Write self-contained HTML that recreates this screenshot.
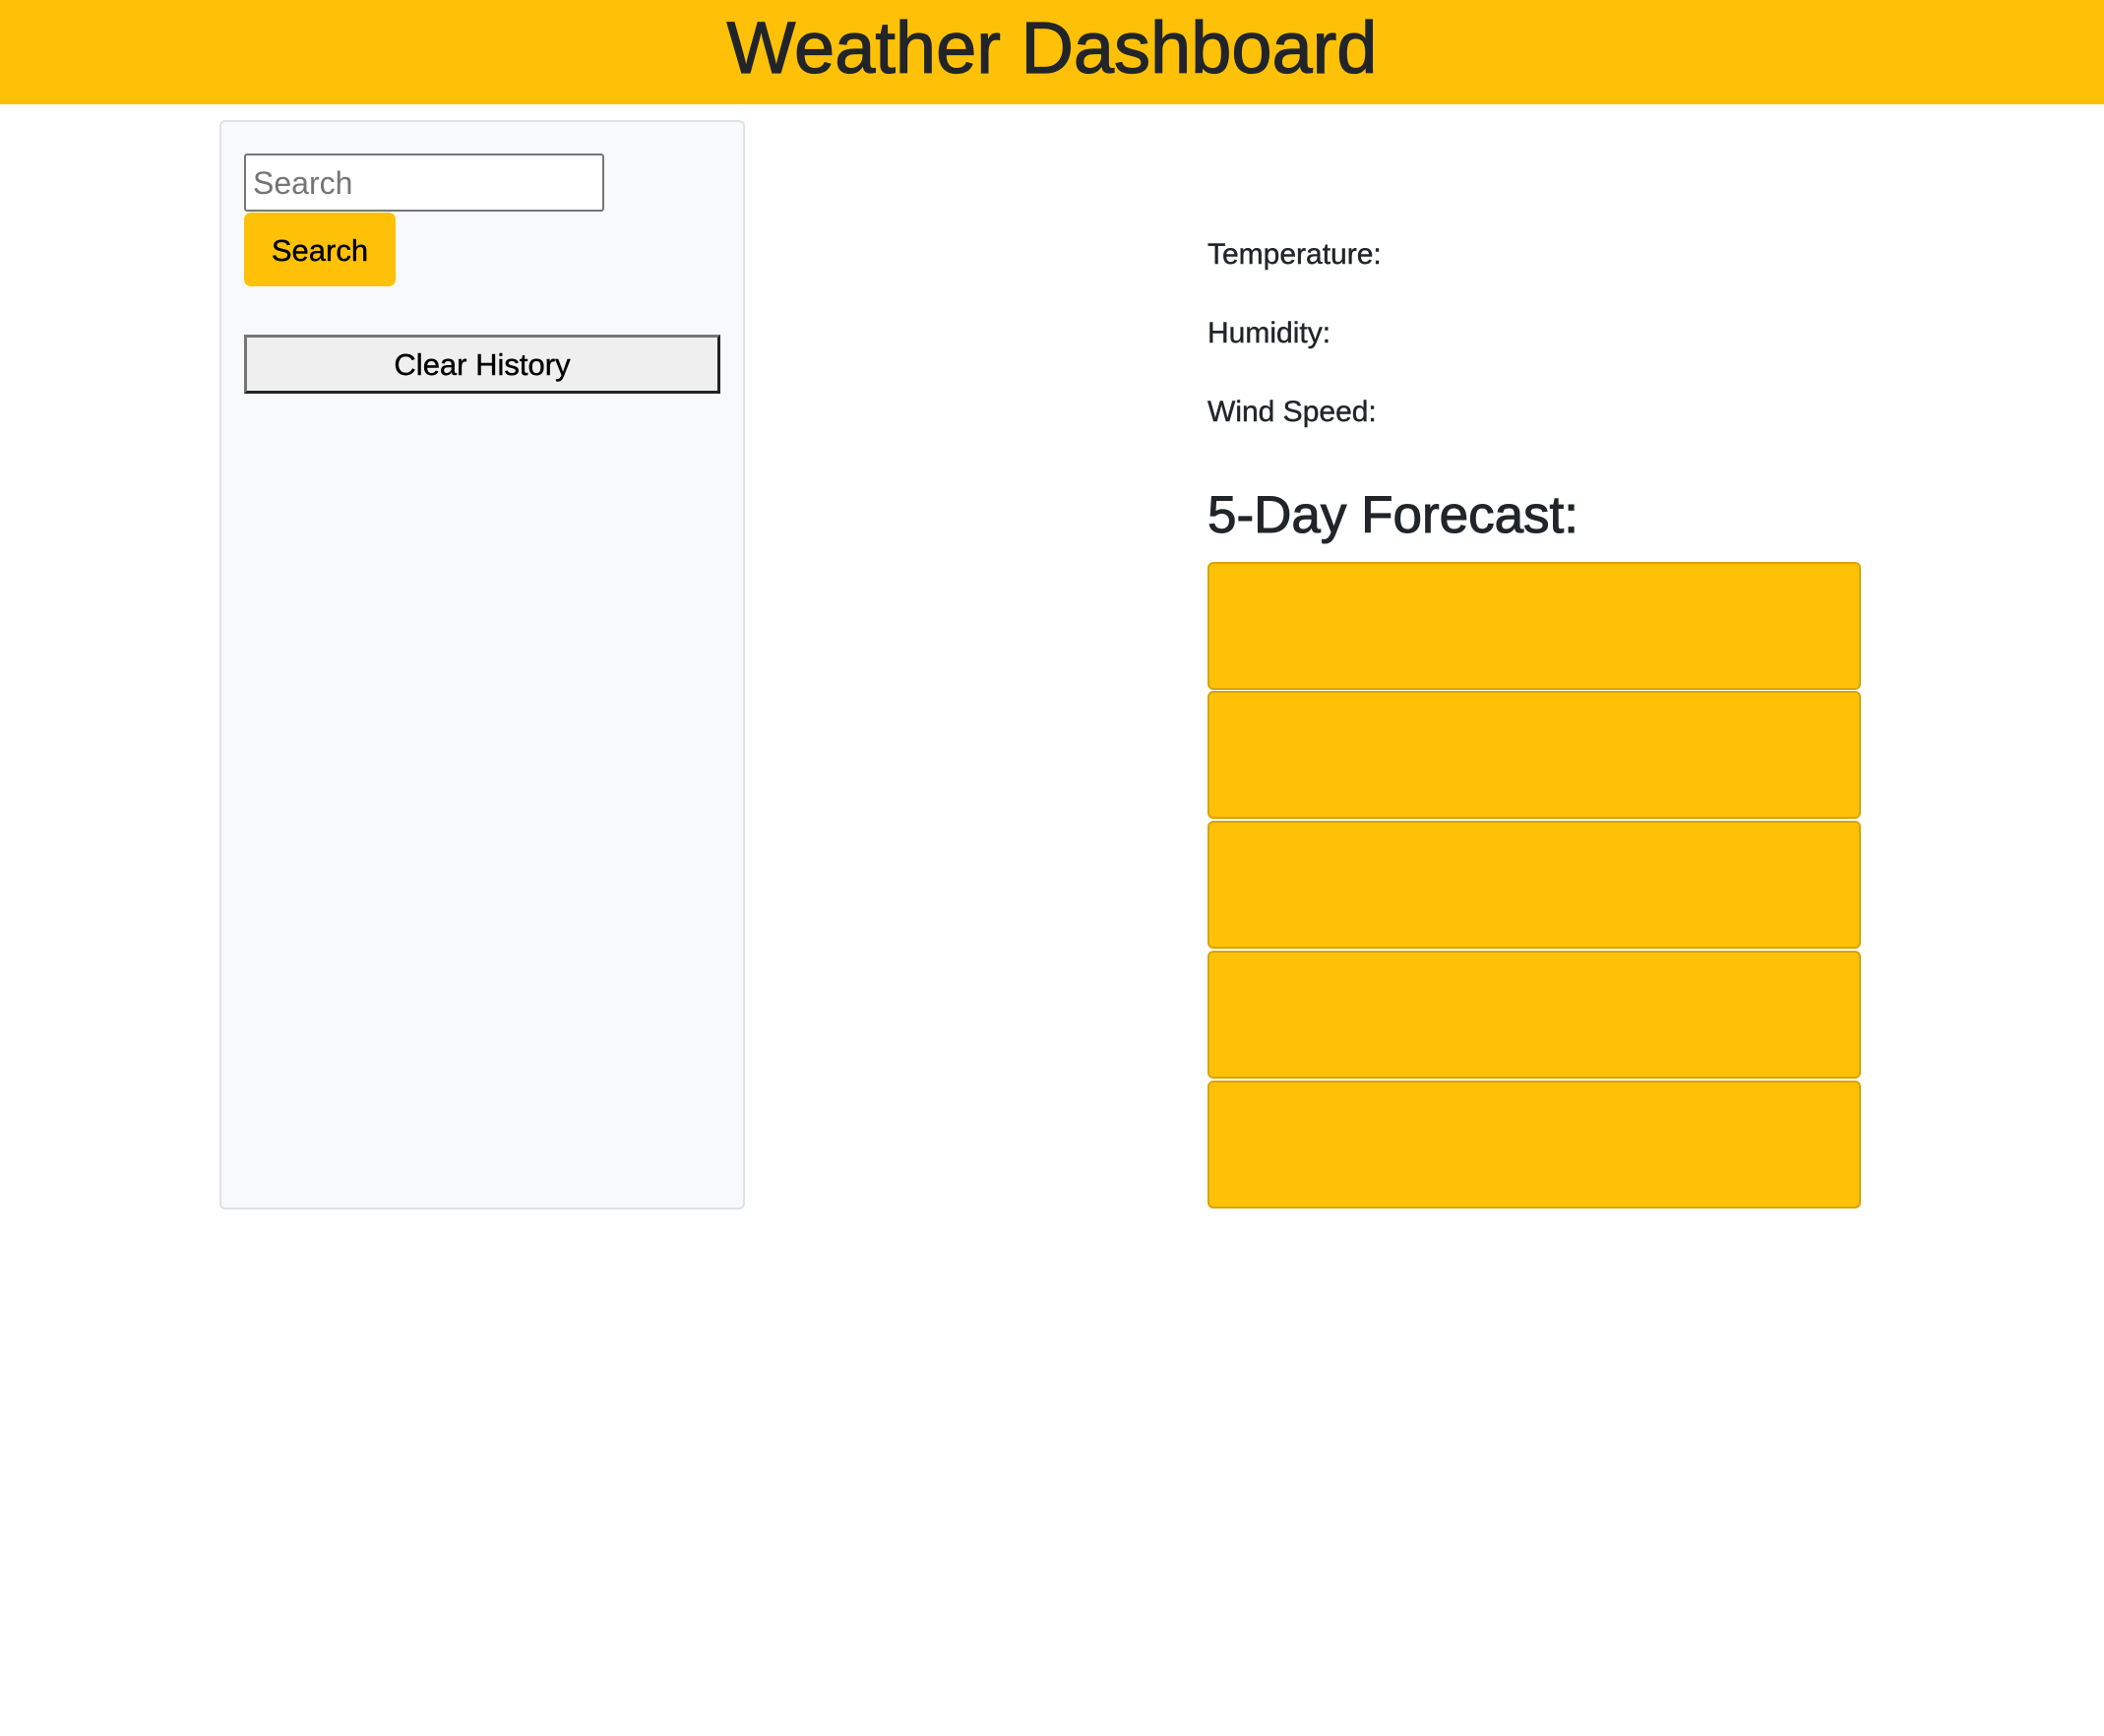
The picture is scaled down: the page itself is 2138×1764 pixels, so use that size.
<!DOCTYPE html>
<html><head><meta charset="utf-8"><style>
html,body{margin:0;padding:0;width:2138px;height:1764px;background:#fff;font-family:"Liberation Sans",sans-serif;color:#212529;overflow:hidden}
.hdr{position:absolute;left:0;top:0;width:2138px;height:106px;background:#ffc107}
.hdr h1{position:absolute;left:0;width:2138px;top:1px;margin:0;text-align:center;font-size:74px;font-weight:normal;line-height:96px;-webkit-text-stroke:1.2px #212529}
.side{position:absolute;left:223px;top:122px;width:534px;height:1107px;background:#f8f9fa;border:2px solid #dee2e6;border-radius:6px;box-sizing:border-box}
.inp{position:absolute;left:248px;top:156px;width:366px;height:59px;border:2px solid #767676;border-radius:3px;background:#fff;box-sizing:border-box;font-size:32px;color:#757575;padding-left:7px;line-height:57px}
.btn{position:absolute;left:248px;top:216px;width:154px;height:75px;background:#ffc107;border-radius:7px;font-size:31px;color:#000;text-align:center;line-height:77px;-webkit-text-stroke:0.4px #000}
.clr{position:absolute;left:248px;top:340px;width:484px;height:60px;background:#efefef;border:3px solid;border-color:#767676 #222 #222 #767676;box-sizing:border-box;font-size:31px;color:#000;text-align:center;line-height:56px;-webkit-text-stroke:0.4px #000}
.t{position:absolute;left:1227px;font-size:30px;line-height:36px;-webkit-text-stroke:0.4px #212529}
.h{position:absolute;left:1227px;top:492px;font-size:53px;line-height:64px;font-weight:normal;margin:0;-webkit-text-stroke:1px #212529}
.card{position:absolute;left:1227px;width:664px;height:130px;background:#ffc107;border:2px solid #d9a406;border-radius:6px;box-sizing:border-box}
</style></head><body>
<div class="hdr"><h1>Weather Dashboard</h1></div>
<div class="side"></div>
<div class="inp">Search</div>
<div class="btn">Search</div>
<div class="clr">Clear History</div>
<div class="t" style="top:241px">Temperature:</div>
<div class="t" style="top:321px">Humidity:</div>
<div class="t" style="top:401px">Wind Speed:</div>
<h2 class="h">5-Day Forecast:</h2>
<div class="card" style="top:571px"></div>
<div class="card" style="top:702px"></div>
<div class="card" style="top:834px"></div>
<div class="card" style="top:966px"></div>
<div class="card" style="top:1098px"></div>
</body></html>
